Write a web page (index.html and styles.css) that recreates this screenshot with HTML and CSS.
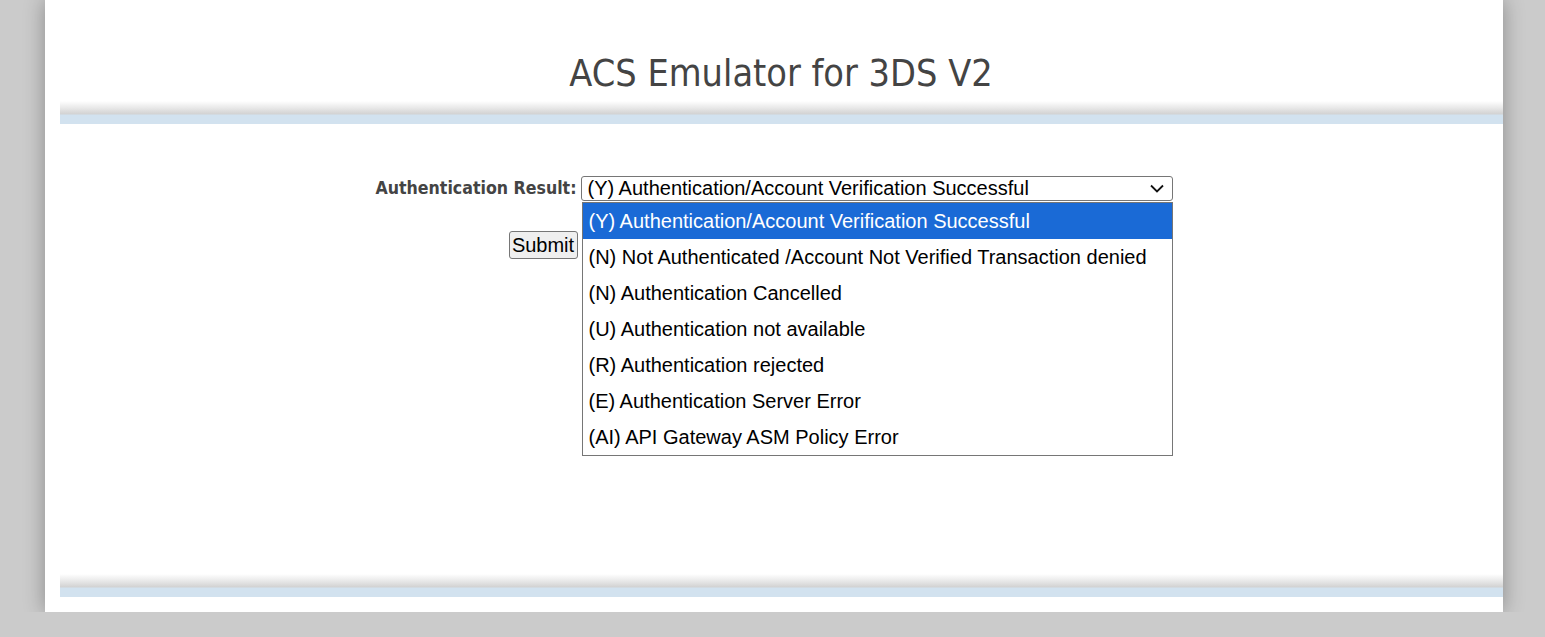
FILE: index.html
```html
<!DOCTYPE html>
<html>
<head>
<meta charset="utf-8">
<title>ACS Emulator for 3DS V2</title>
<link rel="stylesheet" href="styles.css">
</head>
<body>
<div class="page">
  <header class="header">
    <h1 class="title">ACS Emulator for 3DS V2</h1>
    <div class="bar"></div>
  </header>
  <main class="content">
    <form class="form">
      <label class="label">Authentication Result:</label>
      <div class="select-wrap">
        <div class="select">
          <span class="select-text">(Y) Authentication/Account Verification Successful</span>
          <svg class="chevron" width="14" height="9" viewBox="0 0 14 9"><path d="M1 1.5 L7 7.5 L13 1.5" fill="none" stroke="#111" stroke-width="1.8"/></svg>
        </div>
        <ul class="options">
          <li class="option selected">(Y) Authentication/Account Verification Successful</li>
          <li class="option">(N) Not Authenticated /Account Not Verified Transaction denied</li>
          <li class="option">(N) Authentication Cancelled</li>
          <li class="option">(U) Authentication not available</li>
          <li class="option">(R) Authentication rejected</li>
          <li class="option">(E) Authentication Server Error</li>
          <li class="option">(AI) API Gateway ASM Policy Error</li>
        </ul>
      </div>
      <button type="button" class="submit">Submit</button>
    </form>
  </main>
  <footer class="footer">
    <div class="bar"></div>
  </footer>
</div>
</body>
</html>
```
FILE: styles.css
```css
html, body {
  margin: 0;
  padding: 0;
}
body {
  background: #cbcbcb;
  height: 637px;
  overflow: hidden;
}
.page {
  width: 1458px;
  height: 612px;
  margin-left: 45px;
  background: #fff;
  box-shadow: 0 0 20px rgba(0, 0, 0, 0.32);
  clip-path: inset(0 -40px 0 -40px);
  display: flex;
  flex-direction: column;
}
.header {
  height: 124px;
  display: flex;
  flex-direction: column;
}
.title {
  margin: 0;
  height: 101px;
  box-sizing: border-box;
  padding-top: 50px;
  padding-left: 14px;
  text-align: center;
  font-family: "DejaVu Sans Condensed", "DejaVu Sans", sans-serif;
  font-weight: normal;
  font-size: 37.5px;
  line-height: 46px;
  color: #444;
}
.bar {
  margin-left: 15px;
  height: 23px;
  background: linear-gradient(to bottom, #ffffff 0px, #e8e8e8 7px, #d2d2d2 13px, #d2e2ef 14px, #d2e2ef 23px);
}
.content {
  flex: 1;
  padding-top: 52px;
}
.form {
  display: grid;
  grid-template-columns: auto auto;
  justify-content: center;
  column-gap: 4px;
  row-gap: 30px;
}
.label {
  font-family: "DejaVu Sans Condensed", "DejaVu Sans", sans-serif;
  font-weight: bold;
  font-size: 17.6px;
  color: #444;
  justify-self: end;
  align-self: center;
  line-height: 25px;
}
.select-wrap {
  position: relative;
  width: 592px;
}
.select {
  height: 25px;
  box-sizing: border-box;
  border: 1px solid #767676;
  border-radius: 3px;
  display: flex;
  align-items: center;
  justify-content: space-between;
  padding: 0 8px 0 6px;
  font-family: "Liberation Sans", Arial, sans-serif;
  font-size: 20px;
  color: #000;
}
.select-text {
  line-height: 23px;
}
.options {
  position: absolute;
  left: 1px;
  top: 26px;
  width: 591px;
  box-sizing: border-box;
  margin: 0;
  padding: 0;
  list-style: none;
  background: #fff;
  border: 1px solid #767676;
  font-family: "Liberation Sans", Arial, sans-serif;
  font-size: 20px;
  color: #000;
  z-index: 2;
}
.option {
  height: 36px;
  line-height: 36px;
  padding-left: 6px;
  white-space: nowrap;
}
.option.selected {
  background: #1a6ad6;
  color: #fff;
}
.submit {
  grid-column: 1;
  justify-self: end;
  margin-right: -1px;
  width: 69px;
  height: 28px;
  padding: 0;
  border: 1px solid #767676;
  border-radius: 3px;
  background: #efefef;
  font-family: "Liberation Sans", Arial, sans-serif;
  font-size: 20px;
  color: #000;
}
.footer {
  height: 23px;
  margin-bottom: 15px;
}
```
